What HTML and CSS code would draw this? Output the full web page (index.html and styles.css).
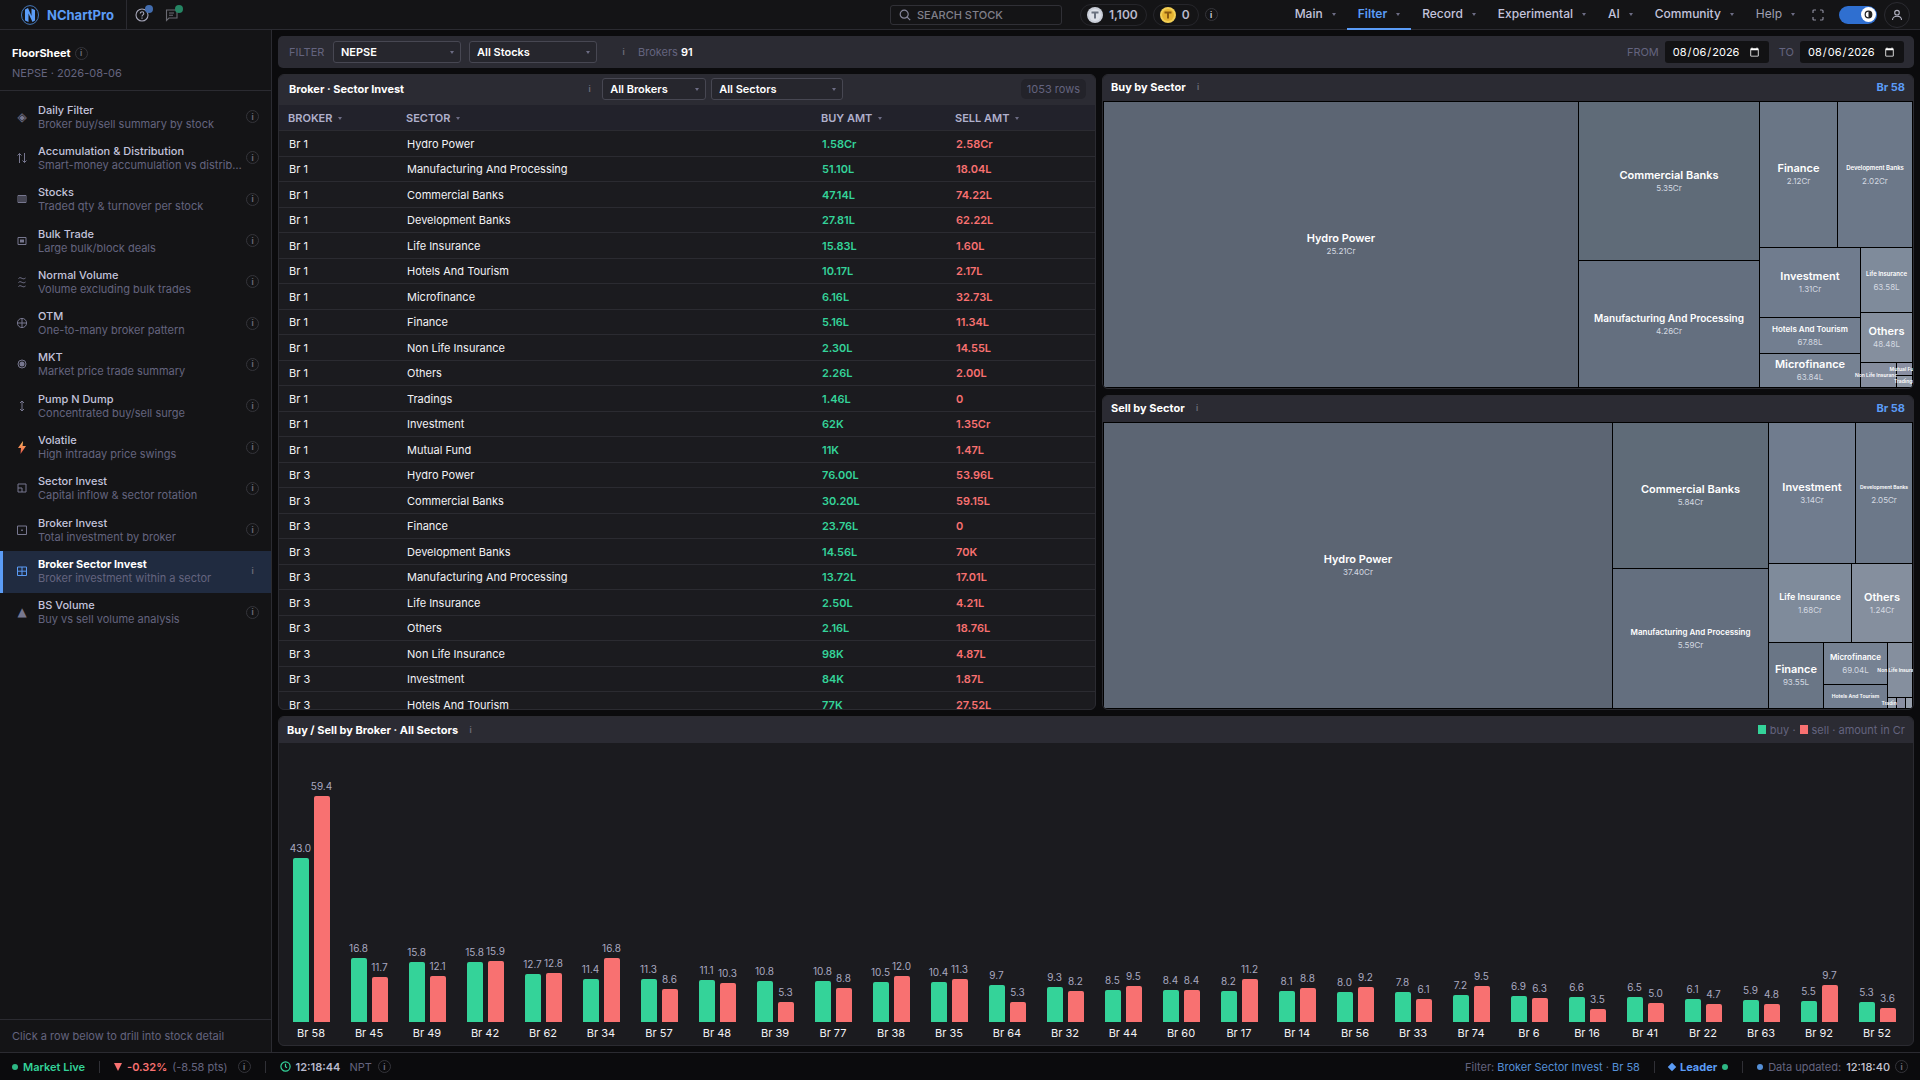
FILE: index.html
```html
<!DOCTYPE html>
<html lang="en">
<head>
<meta charset="utf-8">
<meta name="viewport" content="width=device-width, initial-scale=1">
<title>NChartPro – Broker Sector Invest</title>
<link rel="stylesheet" href="styles.css">
</head>
<body>
<header class="topbar">
  <a class="brand" href="#">
    <svg class="brand-logo" viewBox="0 0 20 20"><ellipse cx="10" cy="10" rx="8.500" ry="9.400" fill="none" stroke="#4577b8" stroke-width="1"/><path d="M5 4.500l3-1.500 3.500 8V3.500L15 5v10.500L12.500 17 8.500 8.500V17L5 15.500z" fill="#5b9cf6"/></svg>
    <span>NChartPro</span>
  </a>
  <button class="icon-btn" aria-label="Help">
    <svg width="14" height="14" viewBox="0 0 14 14" fill="none" stroke="#a6a6b8" stroke-width="1.1"><circle cx="7" cy="7" r="6"/><path d="M5.300 5.500c0-2.300 3.500-2.200 3.500 0 0 1.400-1.800 1.400-1.800 2.900M7 9.500v1.200"/></svg>
    <span class="badge badge-blue"></span>
  </button>
  <button class="icon-btn" aria-label="Messages">
    <svg width="14" height="14" viewBox="0 0 14 14" fill="none" stroke="#6a6a72" stroke-width="1.100"><path d="M1.500 2h10.500v8H4l-2.500 2.500zM4 5h5M4 7.300h4"/></svg>
    <span class="badge badge-green"></span>
  </button>
  <div class="topbar-right">
    <label class="search">
      <svg width="12" height="12" viewBox="0 0 12 12" fill="none" stroke="#85859a" stroke-width="1.200"><circle cx="5.200" cy="5.200" r="4"/><path d="M8.200 8.200l3 3"/></svg>
      <input type="text" placeholder="SEARCH STOCK" aria-label="Search stock">
    </label>
    <span class="pill"><svg width="16" height="16" viewBox="0 0 16 16"><circle cx="8" cy="8" r="8" fill="#c9ced8"/><circle cx="8" cy="8" r="6" fill="#dde0e8"/><path d="M4.500 5.500h7M8 5.500v6" stroke="#6b7280" stroke-width="2"/></svg>1,100</span>
    <span class="pill pill-gold"><svg width="16" height="16" viewBox="0 0 16 16"><circle cx="8" cy="8" r="8" fill="#f3cf55"/><circle cx="8" cy="8" r="6" fill="#e6b432"/><path d="M4.500 5.500h7M8 5.500v6" stroke="#8a5a10" stroke-width="2"/></svg>0</span>
    <span class="info info-bright">i</span>
    <nav class="nav">
      <button>Main<i class="caret"></i></button>
      <button class="active">Filter<i class="caret"></i></button>
      <button>Record<i class="caret"></i></button>
      <button>Experimental<i class="caret"></i></button>
      <button>AI<i class="caret"></i></button>
      <button>Community<i class="caret"></i></button>
      <button class="light">Help<i class="caret"></i></button>
    </nav>
    <button class="icon-btn full" aria-label="Full screen"><svg width="12" height="12" viewBox="0 0 12 12" fill="none" stroke="#8a8a9a" stroke-width="1.200"><path d="M1 4V2q0-1 1-1h2M8 1h2q1 0 1 1v2M11 8v2q0 1-1 1H8M4 11H2q-1 0-1-1V8"/></svg></button>
    <button class="switch" aria-label="Dark theme"><svg width="15" height="15" viewBox="0 0 15 15"><circle cx="7.500" cy="7.500" r="7.500" fill="#fff"/><circle cx="7.500" cy="7.500" r="3.300" fill="#fff" stroke="#222" stroke-width="1.200"/><path d="M7.500 4.200a3.300 3.300 0 010 6.600z" fill="#222"/></svg></button>
    <button class="avatar" aria-label="Account"><svg width="12" height="12" viewBox="0 0 12 12" fill="none" stroke="#b4b4c4" stroke-width="1.100"><circle cx="6" cy="3.700" r="2.300"/><path d="M1.500 11c0-5 9-5 9 0"/></svg></button>
  </div>
</header>

<div class="body">
  <aside class="sidebar">
    <div class="side-head">
      <h1>FloorSheet<span class="info">i</span></h1>
      <p>NEPSE · 2026-08-06</p>
    </div>
    <ul class="menu">
      <li><a href="#"><span class="glyph">◈</span><span class="item"><b>Daily Filter</b><small>Broker buy/sell summary by stock</small></span><span class="info">i</span></a></li>
      <li><a href="#"><span class="glyph"><svg class="sign" viewBox="0 0 12 12"><path d="M3.500 11V1.500M1.500 3.500l2-2 2 2M8.500 1v9.500M6.500 8.500l2 2 2-2"/></svg></span><span class="item"><b>Accumulation &amp; Distribution</b><small>Smart-money accumulation vs distribution</small></span><span class="info">i</span></a></li>
      <li><a href="#"><span class="glyph"><svg class="sign" viewBox="0 0 12 12"><path d="M2 2.500h8v7H2zM4 2.500v7M6 2.500v7M8 2.500v7"/></svg></span><span class="item"><b>Stocks</b><small>Traded qty &amp; turnover per stock</small></span><span class="info">i</span></a></li>
      <li><a href="#"><span class="glyph"><svg class="sign" viewBox="0 0 12 12"><path d="M2 2.500h8v7H2z"/><path d="M4 4.500h4v3H4z" class="solid"/></svg></span><span class="item"><b>Bulk Trade</b><small>Large bulk/block deals</small></span><span class="info">i</span></a></li>
      <li><a href="#"><span class="glyph"><svg class="sign" viewBox="0 0 12 12"><path d="M2.500 2.500c2.500-2.500 4 2 7-.5M2.500 6.500c2.500-2.500 4 2 7-.5M2.500 10.500c2.500-2.500 4 2 7-.5"/></svg></span><span class="item"><b>Normal Volume</b><small>Volume excluding bulk trades</small></span><span class="info">i</span></a></li>
      <li><a href="#"><span class="glyph"><svg class="sign" viewBox="0 0 12 12"><circle cx="6" cy="6" r="4.600"/><path d="M6 1.400v9.200M1.400 6h9.200"/></svg></span><span class="item"><b>OTM</b><small>One-to-many broker pattern</small></span><span class="info">i</span></a></li>
      <li><a href="#"><span class="glyph"><svg class="sign" viewBox="0 0 12 12"><circle cx="6" cy="6" r="4"/><circle cx="6" cy="6" r="2.500" class="solid"/></svg></span><span class="item"><b>MKT</b><small>Market price trade summary</small></span><span class="info">i</span></a></li>
      <li><a href="#"><span class="glyph"><svg class="sign" viewBox="0 0 12 12"><path d="M6 1v10M4 3l2-2 2 2M4 9l2 2 2-2"/></svg></span><span class="item"><b>Pump N Dump</b><small>Concentrated buy/sell surge</small></span><span class="info">i</span></a></li>
      <li><a href="#"><span class="glyph"><svg width="8" height="13" viewBox="0 0 8 13"><defs><linearGradient id="bolt" x1="0" y1="0" x2="0" y2="1"><stop offset="0" stop-color="#ffc060"/><stop offset="1" stop-color="#e8524a"/></linearGradient></defs><path d="M5 0L0 7h3L2.500 13 8 5H4.600z" fill="url(#bolt)"/></svg></span><span class="item"><b>Volatile</b><small>High intraday price swings</small></span><span class="info">i</span></a></li>
      <li><a href="#"><span class="glyph"><svg class="sign" viewBox="0 0 12 12"><path d="M2 2h8v8H2zM2 6h4v4"/></svg></span><span class="item"><b>Sector Invest</b><small>Capital inflow &amp; sector rotation</small></span><span class="info">i</span></a></li>
      <li><a href="#"><span class="glyph"><svg class="sign" viewBox="0 0 12 12"><path d="M1.500 2h9v8.500h-9z"/><path d="M5.200 5.500h1.600v1.600H5.200z" class="solid"/></svg></span><span class="item"><b>Broker Invest</b><small>Total investment by broker</small></span><span class="info">i</span></a></li>
      <li><a href="#" class="active"><span class="glyph"><svg class="sign" viewBox="0 0 12 12"><path d="M1.500 2h9v8.500h-9zM6 2v8.500M1.500 6.200h9"/></svg></span><span class="item"><b>Broker Sector Invest</b><small>Broker investment within a sector</small></span><span class="info bare">i</span></a></li>
      <li><a href="#"><span class="glyph">▲</span><span class="item"><b>BS Volume</b><small>Buy vs sell volume analysis</small></span><span class="info">i</span></a></li>
    </ul>
    <p class="side-foot">Click a row below to drill into stock detail</p>
  </aside>

  <main class="main">
    <form class="filters">
      <span class="cap">FILTER</span>
      <span class="select w-market"><select aria-label="Market"><option>NEPSE</option></select><i class="caret"></i></span>
      <span class="select w-market"><select aria-label="Stocks"><option>All Stocks</option></select><i class="caret"></i></span>
      <span class="info bare">i</span>
      <span class="count">Brokers <b>91</b></span>
      <label class="date first"><span>FROM</span><input type="date" value="2026-08-06"></label>
      <label class="date"><span>TO</span><input type="date" value="2026-08-06"></label>
    </form>

    <div class="panels">
      <section class="panel table-panel">
        <div class="panel-head tall">
          <h2>Broker · Sector Invest</h2>
          <span class="info bare push">i</span>
          <span class="select w-brokers"><select aria-label="Brokers"><option>All Brokers</option></select><i class="caret"></i></span>
          <span class="select w-sectors"><select aria-label="Sectors"><option>All Sectors</option></select><i class="caret"></i></span>
          <span class="rows-tag">1053 rows</span>
        </div>
        <div class="scroll">
          <table class="grid">
            <colgroup><col class="c-broker"><col class="c-sector"><col class="c-buy"><col></colgroup>
            <thead><tr><th>BROKER<i class="caret"></i></th><th>SECTOR<i class="caret"></i></th><th>BUY AMT<i class="caret"></i></th><th>SELL AMT<i class="caret"></i></th></tr></thead>
            <tbody id="rows"></tbody>
          </table>
        </div>
      </section>

      <div class="maps">
        <section class="panel">
          <div class="panel-head"><h2>Buy by Sector</h2><span class="info bare">i</span><b class="tag">Br 58</b></div>
          <div class="map" id="buy-map"></div>
        </section>
        <section class="panel">
          <div class="panel-head"><h2>Sell by Sector</h2><span class="info bare">i</span><b class="tag">Br 58</b></div>
          <div class="map" id="sell-map"></div>
        </section>
      </div>
    </div>

    <section class="panel chart-panel">
      <div class="panel-head"><h2>Buy / Sell by Broker · All Sectors</h2><span class="info bare">i</span>
        <span class="legend"><i class="sw buy"></i>buy · <i class="sw sell"></i>sell · amount in Cr</span></div>
      <div class="chart" id="chart"></div>
    </section>
  </main>
</div>

<footer class="status">
  <span class="live"><i class="dot green"></i>Market Live</span>
  <i class="sep"></i>
  <span class="change"><i class="down"></i><b>-0.32%</b><span>(-8.58 pts)</span></span>
  <span class="info">i</span>
  <i class="sep"></i>
  <span class="clock"><svg width="11" height="11" viewBox="0 0 11 11" fill="none" stroke="#34d399" stroke-width="1.200"><circle cx="5.500" cy="5.500" r="4.600"/><path d="M5.500 2.800v3l1.500 1"/></svg><b>12:18:44</b><span>NPT</span><span class="info">i</span></span>
  <span class="where">Filter: <a href="#">Broker Sector Invest</a> · <a href="#">Br 58</a></span>
  <i class="sep"></i>
  <span class="leader"><i class="diamond"></i>Leader<i class="dot green"></i></span>
  <i class="sep"></i>
  <span class="updated"><i class="dot blue"></i>Data updated:<b>12:18:40</b><span class="info">i</span></span>
</footer>
<script src="script.js"></script>
</body>
</html>
```
FILE: styles.css
```css
* { box-sizing: border-box; }
:root {
  --ink: #f2f2f6; --soft: #c3c3dc; --muted: #64647f; --line: #2b2b31;
  --blue: #5b9cf6; --green: #34d399; --red: #f87171;
  --side: #141416; --head: #2b2b33; --panel: #1b1b1f;
}
body {
  margin: 0; height: 100vh; display: flex; flex-direction: column; overflow: hidden;
  background: #0b0b0d; color: var(--ink);
  font: 11px/14px Inter, "Liberation Sans", sans-serif;
}
button, input, select { font: inherit; color: inherit; }
button { background: none; border: 0; padding: 0; }
a { color: inherit; text-decoration: none; }
h1, h2, p, ul { margin: 0; padding: 0; }
svg { display: block; flex: none; }

.caret { width: 0; height: 0; flex: none; border: 2px solid transparent; border-top: 3px solid #6c6c84; border-bottom: 0; }
.info {
  display: inline-flex; align-items: center; justify-content: center; flex: none;
  width: 13px; height: 13px; border: 1px solid #34343a; border-radius: 50%;
  color: #6a6a76; font-size: 8px; line-height: 8px; font-weight: 700;
}
.info.bare { border-color: transparent; }
.info-bright { color: #d0d0da; }

/* top bar */
.topbar { display: flex; align-items: center; flex: none; height: 30px; padding-right: 10px; background: var(--side); border-bottom: 1px solid var(--line); }
.brand { display: flex; align-items: center; align-self: stretch; gap: 7px; width: 127px; padding-left: 20px; border-right: 1px solid var(--line); color: var(--blue); font-size: 13px; font-weight: 700; }
.brand-logo { width: 20px; height: 20px; }
.icon-btn { position: relative; margin-left: 8px; width: 14px; height: 14px; }
.icon-btn + .icon-btn { margin-left: 16px; }
.badge { position: absolute; top: -3px; right: -4px; width: 8px; height: 8px; border-radius: 50%; }
.badge-blue { background: #426cae; }
.badge-green { background: #258563; }
.topbar-right { display: flex; align-items: center; align-self: stretch; margin-left: auto; }
.search { display: flex; align-items: center; gap: 6px; width: 172px; height: 20px; padding: 0 8px; border: 1px solid #303036; border-radius: 3px; }
.search input { width: 100%; min-width: 0; padding: 0; border: 0; background: none; outline: 0; font-weight: 500; }
.search input::placeholder { color: #80808a; }
.pill { display: flex; align-items: center; gap: 6px; height: 22px; margin-left: 18px; padding: 0 8px 0 6px; border: 1px solid #26262b; border-radius: 11px; color: #b9b9cc; font-size: 12px; font-weight: 600; }
.pill-gold { margin: 0 6px; }
.nav { display: flex; align-self: stretch; margin-left: 66px; }
.nav button { display: flex; align-items: center; gap: 9px; padding: 2px 11px 2px; margin-bottom: -1px; border-bottom: 2px solid transparent; color: var(--soft); font-size: 12px; font-weight: 500; }
.nav .active { color: var(--blue); border-color: var(--blue); font-weight: 600; }
.nav .light { color: #a0a0b2; font-weight: 400; }
.icon-btn.full { width: 12px; height: 12px; margin-left: 6px; }
.switch { display: flex; align-items: center; justify-content: flex-end; width: 38px; height: 18px; margin-left: 15px; padding-right: 1px; border-radius: 9px; background: #2f6fd0; }
.avatar { display: grid; place-items: center; width: 26px; height: 26px; margin-left: 7px; border: 1px solid var(--line); border-radius: 50%; }

.body { display: flex; flex: 1; min-height: 0; }

/* sidebar */
.sidebar { display: flex; flex-direction: column; flex: none; width: 272px; background: var(--side); border-right: 1px solid var(--line); }
.side-head { padding: 16px 12px 10px; border-bottom: 1px solid var(--line); color: var(--muted); }
.side-head h1 { display: flex; align-items: center; gap: 4px; color: #fff; font-size: 11px; line-height: 14px; font-weight: 700; }
.side-head p { margin-top: 6px; }
.menu { display: grid; grid-template-columns: minmax(0, 1fr); grid-auto-rows: 1fr; min-height: 537px; margin-top: 6px; list-style: none; }
.menu a { display: flex; align-items: center; height: 100%; padding: 0 12px 2px 13px; border-left: 3px solid transparent; }
.glyph { display: flex; justify-content: center; flex: none; width: 12px; color: #77778f; font: 12px/14px "DejaVu Sans", sans-serif; }
.sign { width: 12px; height: 12px; fill: none; stroke: currentColor; stroke-width: 1; }
.sign .solid { fill: currentColor; stroke: none; }
.item { flex: 1; min-width: 0; margin: 0 4px 0 10px; }
.item b, .item small { display: block; overflow: hidden; white-space: nowrap; text-overflow: ellipsis; line-height: 14px; }
.item b { color: var(--soft); font-weight: 500; }
.item small { color: var(--muted); font-size: 11px; }
.menu .active { background: #202b40; border-color: var(--blue); }
.menu .active b { color: #fff; font-weight: 700; }
.menu .active .glyph { color: var(--blue); }
.side-foot { margin-top: auto; padding: 9px 12px; border-top: 1px solid var(--line); color: var(--muted); }

/* main area */
.main { display: flex; flex-direction: column; gap: 6px; flex: 1; min-width: 0; padding: 6px; }
.filters { display: flex; align-items: center; flex: none; height: 32px; padding: 0 10px 0 11px; border-radius: 5px; background: var(--head); color: var(--muted); }
.cap { width: 44px; }
.select { position: relative; display: block; height: 22px; }
.select select { width: 100%; height: 100%; padding: 0 7px; appearance: none; border: 1px solid #474752; border-radius: 3px; background: #26262d; color: #fff; font-weight: 600; }
.select .caret { position: absolute; right: 7px; top: 10px; }
.w-market { width: 128px; margin-right: 8px; }
.filters > .info { margin: 0 8px 0 12px; }
.count b { color: #fff; font-weight: 600; }
.date { display: flex; align-items: center; gap: 6px; margin-left: 10px; }
.date.first { margin-left: auto; }
.date input { width: 104px; height: 22px; padding: 0 7px; border: 0; border-radius: 3px; background: #121214; color: #fff; color-scheme: dark; }

.panels { display: grid; grid-template-columns: 818fr 812fr; gap: 6px; flex: 637; min-height: 0; }
.panel { display: flex; flex-direction: column; min-height: 0; min-width: 0; overflow: hidden; border: 1px solid var(--line); border-radius: 6px; background: var(--panel); }
.panel-head { display: flex; align-items: center; flex: none; height: 26px; padding: 0 8px 2px; background: var(--head); }
.panel-head.tall { height: 30px; padding: 0 9px 2px 10px; }
.panel-head h2 { font-size: 11px; font-weight: 700; color: #fff; }
.panel-head .info { margin-left: 6px; }
.panel-head .info.push { margin: 0 6px 0 179px; }
.w-brokers { width: 104px; margin-right: 5px; }
.w-sectors { width: 132px; }
.rows-tag { margin-left: auto; padding: 3px 6px; border-radius: 5px; background: #23232a; color: var(--muted); line-height: 14px; }
.tag { margin-left: auto; color: var(--blue); }
.legend { display: flex; align-items: center; gap: 4px; margin-left: auto; color: var(--muted); }
.sw { width: 8px; height: 9px; }

.scroll { flex: 1; min-height: 0; overflow: hidden; }
.grid { width: 100%; table-layout: fixed; border-collapse: separate; border-spacing: 0; }
.c-broker { width: 118px; } .c-sector { width: 415px; } .c-buy { width: 134px; }
.grid th, .grid td { padding: 0 9px; text-align: left; border-bottom: 1px solid var(--line); white-space: nowrap; }
.grid th { height: 26px; background: #22222b; color: #b0b0cc; font-weight: 600; }
.grid th .caret { display: inline-block; margin-left: 6px; vertical-align: middle; }
.grid td { height: 26px; padding-left: 10px; }
.grid tbody tr:nth-child(even) td { height: 25px; }
.grid .up, .grid .dn { font-weight: 600; }
.up { color: var(--green); } .dn { color: var(--red); }

/* sector maps */
.maps { display: grid; grid-template-rows: 1fr 1fr; gap: 6px; min-height: 0; min-width: 0; }
.map { display: flex; flex: 1; min-height: 0; gap: 1px; padding: 1px; background: #000; overflow: hidden; }
.split-row, .split-col { display: flex; gap: 1px; flex-basis: 0; min-width: 0; min-height: 0; }
.split-col { flex-direction: column; }
.cell { display: flex; flex-direction: column; align-items: center; justify-content: center; gap: 2px; flex-basis: 0; min-width: 0; min-height: 0; white-space: nowrap; }
.cell b { color: #fff; font-weight: 600; line-height: 12px; }
.cell span { color: #d5dae2; font-size: 8px; line-height: 10px; }
.s11 { font-size: 11px; } .s10 { font-size: 10px; } .s9 { font-size: 9px; } .s8 { font-size: 8px; } .s6 { font-size: 6px; } .s5 { font-size: 5px; }

/* bar chart */
.chart-panel { flex: 329; }
.chart-panel .panel-head { padding-bottom: 0; }
.chart { display: flex; flex: 1; min-height: 0; padding: 0 7px 5px 3px; }
.group { display: flex; flex-direction: column; flex: 1; min-width: 0; }
.bars { display: flex; justify-content: center; gap: 5px; flex: 1; min-height: 0; }
.bar { display: flex; flex-direction: column; align-items: center; justify-content: flex-end; width: 16px; color: #a9a9c0; font-size: 10px; }
.bar i { display: block; flex: none; width: 16px; margin-top: 3px; border-radius: 2px 2px 0 0; }
.buy { background: var(--green); } .sell { background: var(--red); }
.group > span { padding-top: 4px; text-align: center; line-height: 14px; }

/* status bar */
.status { display: flex; align-items: center; flex: none; height: 28px; padding: 0 12px; border-top: 1px solid var(--line); color: var(--muted); }
.status > span { display: flex; align-items: center; gap: 5px; white-space: pre; }
.sep { width: 1px; height: 12px; margin: 0 14px; background: #303036; }
.dot { width: 6px; height: 6px; border-radius: 50%; }
.green { background: #2eb885; } .blue { background: #5590d8; }
.live { color: var(--green); font-weight: 600; }
.down { border: 4px solid transparent; border-top: 8px solid var(--red); border-bottom: 0; }
.change b { color: var(--red); font-weight: 600; }
.status > .info { margin-left: 10px; }
.clock b { margin-right: 4px; color: #b9b9cc; font-weight: 600; }
.clock .info { margin-left: 1px; }
.status > .where { display: block; margin-left: auto; }
.where a { color: #5590d8; }
.leader { color: var(--blue); font-weight: 700; }
.diamond { width: 6px; height: 6px; transform: rotate(45deg); background: var(--blue); }
.updated b { color: #c6c6d2; font-weight: 500; }
```
FILE: script.js
```js
const rows = [
  [1, "Hydro Power", "1.58Cr", "2.58Cr"], [1, "Manufacturing And Processing", "51.10L", "18.04L"],
  [1, "Commercial Banks", "47.14L", "74.22L"], [1, "Development Banks", "27.81L", "62.22L"],
  [1, "Life Insurance", "15.83L", "1.60L"], [1, "Hotels And Tourism", "10.17L", "2.17L"],
  [1, "Microfinance", "6.16L", "32.73L"], [1, "Finance", "5.16L", "11.34L"],
  [1, "Non Life Insurance", "2.30L", "14.55L"], [1, "Others", "2.26L", "2.00L"],
  [1, "Tradings", "1.46L", "0"], [1, "Investment", "62K", "1.35Cr"], [1, "Mutual Fund", "11K", "1.47L"],
  [3, "Hydro Power", "76.00L", "53.96L"], [3, "Commercial Banks", "30.20L", "59.15L"],
  [3, "Finance", "23.76L", "0"], [3, "Development Banks", "14.56L", "70K"],
  [3, "Manufacturing And Processing", "13.72L", "17.01L"], [3, "Life Insurance", "2.50L", "4.21L"],
  [3, "Others", "2.16L", "18.76L"], [3, "Non Life Insurance", "98K", "4.87L"],
  [3, "Investment", "84K", "1.87L"], [3, "Hotels And Tourism", "77K", "27.52L"]
];
document.getElementById("rows").innerHTML = rows.map(([b, s, buy, sell]) =>
  `<tr><td>Br ${b}</td><td>${s}</td><td class="up">${buy}</td><td class="dn">${sell}</td></tr>`).join("");

// broker, buy, sell (Cr)
const brokers = [
  [58, 43.0, 59.4], [45, 16.8, 11.7], [49, 15.8, 12.1], [42, 15.8, 15.9], [62, 12.7, 12.8], [34, 11.4, 16.8],
  [57, 11.3, 8.6], [48, 11.1, 10.3], [39, 10.8, 5.3], [77, 10.8, 8.8], [38, 10.5, 12.0], [35, 10.4, 11.3],
  [64, 9.7, 5.3], [32, 9.3, 8.2], [44, 8.5, 9.5], [60, 8.4, 8.4], [17, 8.2, 11.2], [14, 8.1, 8.8],
  [56, 8.0, 9.2], [33, 7.8, 6.1], [74, 7.2, 9.5], [6, 6.9, 6.3], [16, 6.6, 3.5], [41, 6.5, 5.0],
  [22, 6.1, 4.7], [63, 5.9, 4.8], [92, 5.5, 9.7], [52, 5.3, 3.6]
];
const bar = (v, kind) => `<div class="bar">${v.toFixed(1)}<i class="${kind}" style="height:${(v / 59.4 * 81).toFixed(1)}%"></i></div>`;
document.getElementById("chart").innerHTML = brokers.map(([b, buy, sell]) =>
  `<div class="group"><div class="bars">${bar(buy, "buy")}${bar(sell, "sell")}</div><span>Br ${b}</span></div>`).join("");

// leaf: [weight, colour, text size, name, amount]; branch: {w, row|col: [...]}
const draw = n => {
  if (Array.isArray(n)) {
    const [w, c, s, name, amt] = n;
    return `<div class="cell" style="flex-grow:${w};background:${c}">` +
      (name ? `<b class="s${s}">${name}</b>` : "") + (amt ? `<span>${amt}</span>` : "") + `</div>`;
  }
  const dir = n.row ? "row" : "col";
  return `<div class="split-${dir}" style="flex-grow:${n.w}">${n[dir].map(draw).join("")}</div>`;
};
const buyMap = [
  [474, "#5c6573", 11, "Hydro Power", "25.21Cr"],
  { w: 180, col: [[158, "#5f6b78", 11, "Commercial Banks", "5.35Cr"], [126, "#646f7f", 10, "Manufacturing And Processing", "4.26Cr"]] },
  { w: 152, col: [
    { w: 145, row: [[77, "#6a7686", 11, "Finance", "2.12Cr"], [74, "#6c7889", 6, "Development Banks", "2.02Cr"]] },
    { w: 139, row: [
      { w: 100, col: [[69, "#707c8e", 11, "Investment", "1.31Cr"], [35, "#727e90", 8, "Hotels And Tourism", "67.88L"], [33, "#768293", 11, "Microfinance", "63.84L"]] },
      { w: 51, col: [[64, "#7f8b9b", 6, "Life Insurance", "63.58L"], [49, "#858f9e", 11, "Others", "48.48L"],
        { w: 24, row: [[35, "#858d9e", 5, "Non Life Insuranc...", ""], { w: 15, col: [[12, "#8a8fa2", 5, "Mutual Fund", ""], [11, "#8f98a6", 5, "Tradings", ""]] }] }] }
    ] }
  ] }
];
const sellMap = [
  [508, "#5c6573", 11, "Hydro Power", "37.40Cr"],
  { w: 155, col: [[145, "#5f6b78", 11, "Commercial Banks", "5.84Cr"], [139, "#646f7f", 8, "Manufacturing And Processing", "5.59Cr"]] },
  { w: 143, col: [
    { w: 140, row: [[86, "#707c8e", 11, "Investment", "3.14Cr"], [56, "#6c7889", 5, "Development Banks", "2.05Cr"]] },
    { w: 78, row: [[82, "#7f8b9b", 9, "Life Insurance", "1.68Cr"], [60, "#858f9e", 11, "Others", "1.24Cr"]] },
    { w: 65, row: [[54, "#6a7686", 11, "Finance", "93.55L"],
      { w: 63, col: [[41, "#768293", 8, "Microfinance", "69.04L"], [23, "#727e90", 5, "Hotels And Tourism", ""]] },
      { w: 24, col: [[54, "#858f9e", 5, "Non Life Insurance", ""], { w: 10, row: [[8, "#8f98a6", 5, "Tradings", ""], [8, "#8a8fa2"], [6, "#98a0ad"]] }] }] }
  ] }
];
document.getElementById("buy-map").innerHTML = buyMap.map(draw).join("");
document.getElementById("sell-map").innerHTML = sellMap.map(draw).join("");
```
